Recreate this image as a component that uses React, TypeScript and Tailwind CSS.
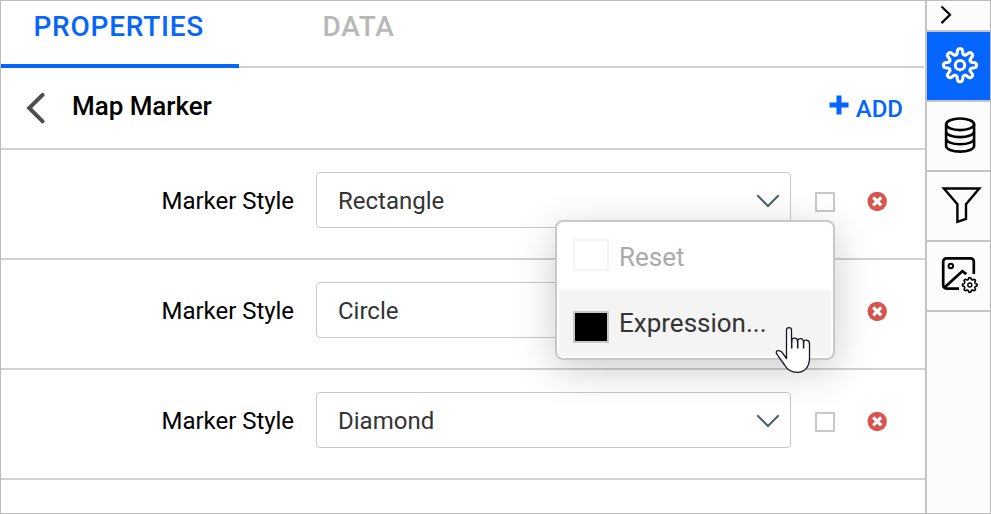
import React from "react";

const options = ["Rectangle", "Circle", "Diamond"];

function gearPath(cx: number, cy: number, base: number, amp: number, teeth: number) {
  const steps = 144;
  let d = "";
  for (let i = 0; i < steps; i++) {
    const a = (i / steps) * Math.PI * 2 - Math.PI / 2;
    const w = Math.cos(teeth * (a + Math.PI / 2));
    const r = base + amp * Math.tanh(w * 1.8);
    d += `${i ? "L" : "M"}${(cx + r * Math.cos(a)).toFixed(2)} ${(cy + r * Math.sin(a)).toFixed(2)}`;
  }
  return d + "Z";
}

function MarkerRow({ value }: { value: string }) {
  return (
    <div className="flex h-[110px] items-start border-b-2 border-[#d1d1d1] pt-[22px]">
      <div className="w-[293px] text-right text-[24px] leading-[59px] tracking-[-0.04px] text-black">Marker Style</div>
      <div className="ml-[22px] flex h-14 w-[475px] items-center justify-between rounded-[4px] border border-[#c8c8c8] pr-2.5 pl-[21px]">
        <span className="pt-0.5 text-[24px] leading-[54px] text-[#333]">{value}</span>
        <svg className="mt-px" width="24" height="14" viewBox="0 0 24 14" fill="none" stroke="#4c5f70" strokeWidth="2">
          <path d="M1.3 1.3 12 12 22.7 1.3" />
        </svg>
      </div>
      <div className="mt-5 ml-6 size-5 border-2 border-[#c8c8c8] bg-white" />
      <svg className="mt-[19px] ml-8" width="20" height="20" viewBox="0 0 20 20">
        <circle cx="10.2" cy="10.4" r="9.7" fill="#d9534f" />
        <path d="m6.2 6.4 8 8m0-8-8 8" stroke="#fff" strokeWidth="3.2" />
      </svg>
    </div>
  );
}

function SideCell({ active = false, children }: { active?: boolean; children: React.ReactNode }) {
  return (
    <div className={`flex h-[70px] border-b-2 border-[#c4c4c4] ${active ? "bg-[#0565ff]" : "bg-[#fcfcfc]"}`}>
      {children}
    </div>
  );
}

function Sidebar() {
  return (
    <div className="w-[65px] shrink-0 border-l-2 border-[#c4c4c4] bg-[#fcfcfc]">
      <div className="h-[31px] border-b-2 border-[#c4c4c4]">
        <svg width="63" height="29" viewBox="927 1 63 29" fill="none" stroke="#000" strokeWidth="2.2">
          <path d="m941.5 6.5 8.5 8.3-8.5 8.3" />
        </svg>
      </div>
      <SideCell active>
        <svg width="63" height="68" viewBox="927 32 63 68" fill="none" stroke="#fff" strokeWidth="3.1" strokeLinejoin="round">
          <path d={gearPath(960, 65.2, 13.8, 2.9, 8)} />
          <circle cx="960" cy="65.2" r="4.7" />
        </svg>
      </SideCell>
      <SideCell>
        <svg width="63" height="68" viewBox="927 102 63 68" fill="none" stroke="#000" strokeWidth="2.6">
          <ellipse cx="960.1" cy="124.3" rx="14" ry="5.8" />
          <path d="M946.1 124v22c0 3 6 5.6 14 5.6s14-2.6 14-5.6V124M946.1 131.5c0 3 6 5.6 14 5.6s14-2.6 14-5.6M946.1 138.7c0 3 6 5.6 14 5.6s14-2.6 14-5.6" />
        </svg>
      </SideCell>
      <SideCell>
        <svg width="63" height="68" viewBox="927 172 63 68" fill="none" stroke="#000" strokeWidth="2.4">
          <path d="M943.9 188.5h35.4L966 204.2v14.6l-8.6 3V204.200Z" />
        </svg>
      </SideCell>
      <SideCell>
        <svg width="63" height="68" viewBox="927 242 63 68" fill="none" stroke="#000" strokeWidth="2.7">
          <path d="M973.8 274v-12.5a3.2 3.2 0 0 0-3.2-3.2h-24.2a3.2 3.2 0 0 0-3.2 3.2v23.900a3.200 3.200 0 0 0 3.200 3.200H959M944.500 287.500l17.800-16.300 4 3" />
          <circle cx="950.8" cy="266" r="2.200" strokeWidth="2" />
          <path d={gearPath(969.8, 285, 6.5, 0.9, 8)} strokeWidth="1.6" />
          <circle cx="969.8" cy="285" r="2" strokeWidth="1.4" />
        </svg>
      </SideCell>
    </div>
  );
}

function ContextMenu() {
  return (
    <div className="absolute top-[220px] left-[555px] h-[140px] w-[280px] rounded-[8px] border-2 border-[#c8c8c8] bg-white p-0.5 shadow-[0_10px_40px_rgba(0,0,0,0.2)]">
      <div className="flex h-[66px] items-start pt-[15px] pl-3.5">
        <div className="h-8 w-9 border-2 border-[#f4f4f4]" />
        <span className="ml-2.5 text-[26px] leading-9 text-[#aaa]">Reset</span>
      </div>
      <div className="flex h-[66px] items-start bg-[#f4f4f4] pl-3.5">
        <div className="mt-[21px] h-8 w-9 border-2 border-[#c8c8c8] bg-black" />
        <span className="mt-[15px] ml-2.5 text-[26px] leading-9 text-[#333]">Expression...</span>
      </div>
    </div>
  );
}

export default function App() {
  return (
    <div className="relative flex h-[514px] w-[991px] overflow-hidden border border-[#bcbcbc] bg-white font-['Roboto',sans-serif]">
      <main className="w-[924px] shrink-0">
        <div className="mr-px flex h-[67px] border-b-2 border-[#d1d1d1] text-[28px] leading-[51px] font-medium tracking-[0.75px]">
          <div className="h-[67px] w-[238px] border-b-4 border-[#0565ff] pl-[32.500px] text-[#0565ff]">PROPERTIES</div>
          <div className="pl-[83.500px] text-[#b8b8b8]">DATA</div>
        </div>
        <div className="flex h-[82px] items-start border-b-2 border-[#d1d1d1]">
          <svg className="mt-[22px] ml-6" width="22" height="36" viewBox="25 90 22 36" fill="none" stroke="#4d4d4d" strokeWidth="4" strokeLinecap="round">
            <path d="M42.6 94.8 29.2 108l13.4 13.3" />
          </svg>
          <h1 className="mt-5 ml-[25px] text-[26px] leading-9 font-medium tracking-[-0.05px] text-black">Map Marker</h1>
          <div className="mr-[22px] ml-auto flex items-start text-[#0565ff]">
            <svg className="mt-[27px] mr-[7px]" width="20" height="20" viewBox="0 0 20 20">
              <path d="M.5 10h19M10 .5v19" stroke="currentColor" strokeWidth="5" />
            </svg>
            <span className="mt-[23px] text-[24px] leading-9 font-medium">ADD</span>
          </div>
        </div>
        {options.map((value) => (
          <MarkerRow key={value} value={value} />
        ))}
      </main>
      <Sidebar />
      <div className="absolute -top-px -left-px">
        <ContextMenu />
        <svg className="absolute top-[322px] left-[772px]" width="44" height="56" viewBox="772 322 44 56">
          <path
            d="M786.5 358.5V330c0-3.2 5-3.2 5 0v11.500c0-4.500 6-4.500 6 0 0-4 6-4 6 .7 0-3.200 6-3 6 1.600v14.500c0 8-4.600 14-12.300 14-6.600 0-10-2.600-12.600-7.300l-7.400-10.300c-2.800-4 1.200-5.300 4.500-2.800Z"
            fill="#fff"
            stroke="#151525"
            strokeWidth="1.3"
            strokeLinejoin="round"
          />
          <path d="M791.7 339v9.400m6-7.900v7.900m5.900-7.200v7.200" fill="none" stroke="#151525" strokeWidth="1.5" />
        </svg>
      </div>
    </div>
  );
}
